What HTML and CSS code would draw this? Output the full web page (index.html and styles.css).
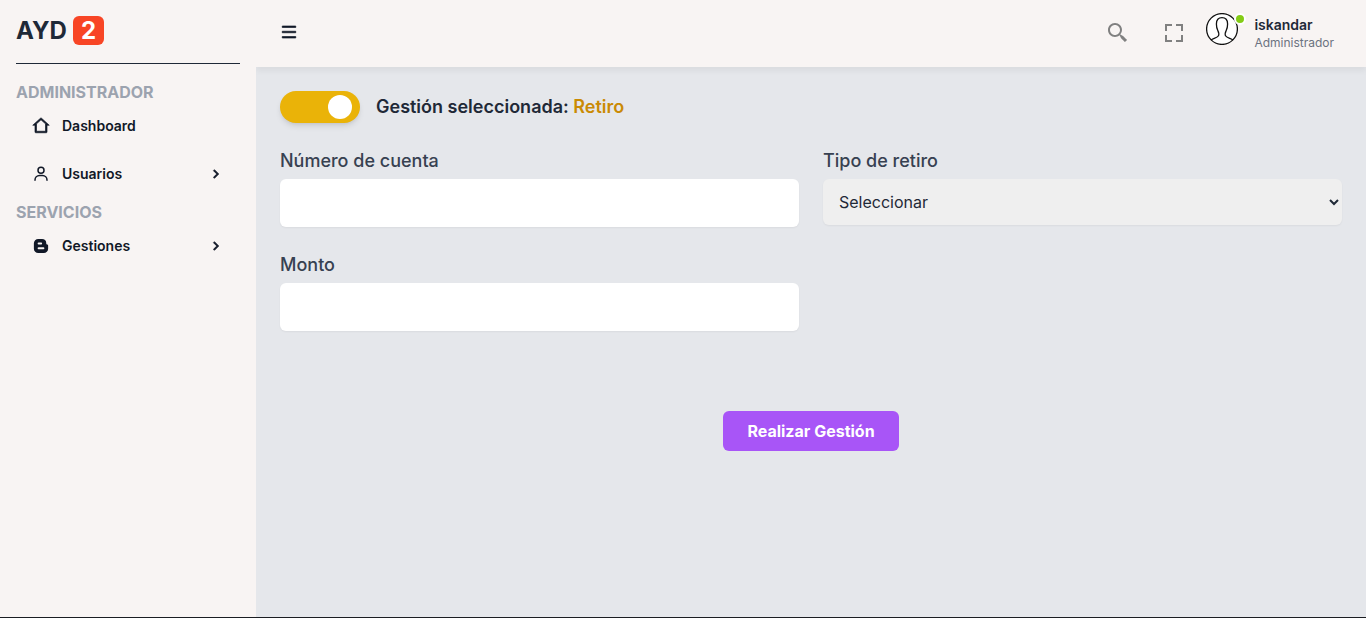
FILE: index.html
```html
<!DOCTYPE html>
<html lang="es">
<head>
<meta charset="utf-8">
<title>AYD 2</title>
<link rel="stylesheet" href="styles.css">
</head>
<body>
<div class="app">
  <aside class="sidebar">
    <a class="brand"><span>AYD</span><span class="brand-badge">2</span></a>
    <nav class="menu">
      <span class="menu-heading">ADMINISTRADOR</span>
      <a class="menu-item">
        <svg class="menu-icon bold" viewBox="0 0 24 24"><path d="M19 21H5a1 1 0 0 1-1-1v-9H1l10.327-9.388a1 1 0 0 1 1.346 0L23 11h-3v9a1 1 0 0 1-1 1zM6 19h12V9.157l-6-5.454-6 5.454V19z"/></svg>
        <span>Dashboard</span>
      </a>
      <a class="menu-item second">
        <svg class="menu-icon" viewBox="0 0 24 24"><path d="M12 2a5 5 0 1 0 5 5 5 5 0 0 0-5-5zm0 8a3 3 0 1 1 3-3 3 3 0 0 1-3 3zm9 11v-1a7 7 0 0 0-7-7h-4a7 7 0 0 0-7 7v1h2v-1a5 5 0 0 1 5-5h4a5 5 0 0 1 5 5v1z"/></svg>
        <span>Usuarios</span>
        <svg class="chevron" viewBox="0 0 24 24"><path d="M13.172 12l-4.95-4.95 1.414-1.414L16 12l-6.364 6.364-1.414-1.414z"/></svg>
      </a>
      <span class="menu-heading">SERVICIOS</span>
      <a class="menu-item">
        <svg class="menu-icon" viewBox="0 0 24 24"><path fill-rule="evenodd" d="M8.300 2.500H13.500a5.500 5.500 0 0 1 5.500 5.500v.7c0 .9.500 1.300 1.200 1.300.9 0 1.300.5 1.300 1.300V15.500a5.800 5.800 0 0 1-5.800 5.800H8.300a5.800 5.800 0 0 1-5.800-5.800V8.300a5.800 5.800 0 0 1 5.800-5.800zM8.800 7.300a1.300 1.300 0 0 0 0 2.600h3.400a1.300 1.300 0 0 0 0-2.600zm0 6.500a1.300 1.300 0 0 0 0 2.600h6.400a1.300 1.300 0 0 0 0-2.600z"/></svg>
        <span>Gestiones</span>
        <svg class="chevron" viewBox="0 0 24 24"><path d="M13.172 12l-4.950-4.950 1.414-1.414L16 12l-6.364 6.364-1.414-1.414z"/></svg>
      </a>
    </nav>
  </aside>
  <div class="main">
    <header class="topbar">
      <svg class="burger" viewBox="0 0 24 24"><path d="M3 4h18v2H3zM3 11h18v2H3zM3 18h18v2H3z"/></svg>
      <div class="tools">
        <svg class="tool" viewBox="0 0 24 24"><path d="M19.023 16.977a35.130 35.130 0 0 1-1.367-1.384c-.372-.378-.596-.653-.596-.653l-2.800-1.337A6.962 6.962 0 0 0 16 9c0-3.859-3.140-7-7-7S2 5.141 2 9s3.140 7 7 7c1.763 0 3.370-.66 4.603-1.739l1.337 2.800s.275.224.653.596c.387.363.896.854 1.384 1.367l1.358 1.392.604.646 2.121-2.121-.646-.604c-.379-.372-.885-.866-1.391-1.360zM9 14c-2.757 0-5-2.243-5-5s2.243-5 5-5 5 2.243 5 5-2.243 5-5 5z"/></svg>
        <svg class="tool" viewBox="0 0 24 24"><path d="M5 5h5V3H3v7h2zm5 14H5v-5H3v7h7zm11-5h-2v5h-5v2h7zm-2-4h2V3h-7v2h5z"/></svg>
      </div>
      <div class="user">
        <div class="avatar">
          <svg viewBox="0 0 32 32"><circle cx="16" cy="16" r="15.400"/><path d="M5 27c2-1.600 6-2 7.300-4 1.200-1.800.4-3.700-.5-5.500-1-2-1.400-4-1.400-6.500 0-4 2-6.300 5.600-6.300s5.600 2.300 5.600 6.300c0 2.500-.4 4.500-1.400 6.500-.9 1.800-1.700 3.700-.5 5.500 1.300 2 5.300 2.400 7.300 4"/></svg>
          <span class="status"></span>
        </div>
        <div class="who">
          <h2 class="name">iskandar</h2>
          <p class="role">Administrador</p>
        </div>
      </div>
    </header>
    <main class="content">
      <div class="mode">
        <div class="toggle"><span class="knob"></span></div>
        <p class="mode-label">Gestión seleccionada: <span class="mode-value">Retiro</span></p>
      </div>
      <form class="form">
        <div class="field"><label class="label" for="cuenta">Número de cuenta</label><input class="input" id="cuenta" type="text"></div>
        <div class="field"><label class="label" for="tipo">Tipo de retiro</label><select class="input select" id="tipo"><option>Seleccionar</option></select></div>
        <div class="field"><label class="label" for="monto">Monto</label><input class="input" id="monto" type="text"></div>
      </form>
      <div class="actions"><button class="submit" type="button">Realizar Gestión</button></div>
    </main>
  </div>
</div>
</body>
</html>
```

FILE: styles.css
```css
*, *::before, *::after { box-sizing: border-box; margin: 0; }
body {
  font-family: Inter, sans-serif;
  font-size: 16px;
  line-height: 24px;
  color: #1f2937;
  overflow: hidden;
}
svg { display: block; flex: none; }
.app { display: flex; height: 618px; border-bottom: 1px solid #1b1d22; background: #e5e7eb; }
.sidebar { position: relative; z-index: 1; width: 256px; padding: 16px; background: #f8f4f3; }
.brand {
  display: flex;
  gap: 6px;
  height: 48px;
  border-bottom: 1px solid #1f2937;
  font-size: 24px;
  line-height: 29px;
  font-weight: 700;
}
.brand-badge {
  height: 29px;
  padding: 0 8px;
  border-radius: 6px;
  background: #f84525;
  color: #fff;
}
.menu { display: flex; flex-direction: column; padding-top: 16px; }
.menu-heading { color: #9ca3af; font-weight: 700; }
.menu-item {
  display: flex;
  align-items: center;
  height: 44px;
  padding: 0 16px;
  color: #111827;
  font-size: 14px;
  line-height: 20px;
  font-weight: 600;
}
.second { height: 36px; margin: 8px 0; }
.menu-icon { width: 18px; height: 18px; margin-right: 12px; fill: currentColor; }
.bold { stroke: currentColor; stroke-width: .9; }
.chevron { width: 16px; height: 16px; margin-left: auto; fill: currentColor; stroke: currentColor; stroke-width: 1.3; }
.main { flex: 1; display: flex; flex-direction: column; }
.topbar {
  display: flex;
  align-items: center;
  height: 67px;
  padding: 0 32px 0 24px;
  background: #f8f4f3;
  box-shadow: 0 4px 6px rgba(0,0,0,.05);
}
.burger { width: 18px; height: 18px; margin-bottom: 3px; fill: #111827; stroke: #111827; stroke-width: .9; }
.tools { display: flex; gap: 32px; margin: 0 20px 1px auto; }
.tool { width: 24px; height: 24px; fill: gray; }
.user { display: flex; align-items: center; gap: 16px; }
.avatar { position: relative; width: 32px; height: 32px; margin-bottom: 9px; }
.avatar svg { width: 32px; height: 32px; fill: #fff; stroke: #111; stroke-width: 1.3; }
.avatar path { fill: none; }
.status {
  position: absolute;
  top: 0;
  right: -8px;
  width: 12px;
  height: 12px;
  border: 2px solid #fff;
  border-radius: 50%;
  background: #84cc16;
}
.who { margin-bottom: 2px; }
.name { font-size: 14px; line-height: 20px; font-weight: 600; }
.role { font-size: 12px; line-height: 16px; color: #6b7280; }
.content { padding: 24px; }
.mode { display: flex; align-items: center; gap: 16px; margin-bottom: 24px; }
.toggle {
  display: flex;
  align-items: center;
  justify-content: flex-end;
  width: 80px;
  height: 32px;
  padding: 0 8px;
  border-radius: 16px;
  background: #eab308;
  box-shadow: 0 4px 6px -1px rgba(0,0,0,.1), 0 2px 4px -2px rgba(0,0,0,.1);
}
.knob { width: 24px; height: 24px; border-radius: 50%; background: #fff; }
.mode-label { font-size: 18px; line-height: 28px; font-weight: 600; }
.mode-value { color: #ca8a04; }
.form { display: grid; grid-template-columns: 1fr 1fr; gap: 24px; }
.field { display: flex; flex-direction: column; gap: 4px; }
.label { font-size: 18px; line-height: 28px; font-weight: 500; color: #374151; }
.input {
  width: 100%;
  height: 48px;
  padding: 12px 16px;
  border: 0;
  border-radius: 6px;
  background: #fff;
  color: inherit;
  font: inherit;
  box-shadow: 0 1px 2px rgba(0,0,0,.05);
}
.select { height: 46px; padding: 12px; background: #efefef; }
.actions { display: flex; justify-content: center; margin-top: 80px; }
.submit {
  height: 40px;
  padding: 8px 24px;
  border: 0;
  border-radius: 6px;
  background: #a855f7;
  color: #fff;
  font: 700 16px/24px Inter, sans-serif;
}
```
